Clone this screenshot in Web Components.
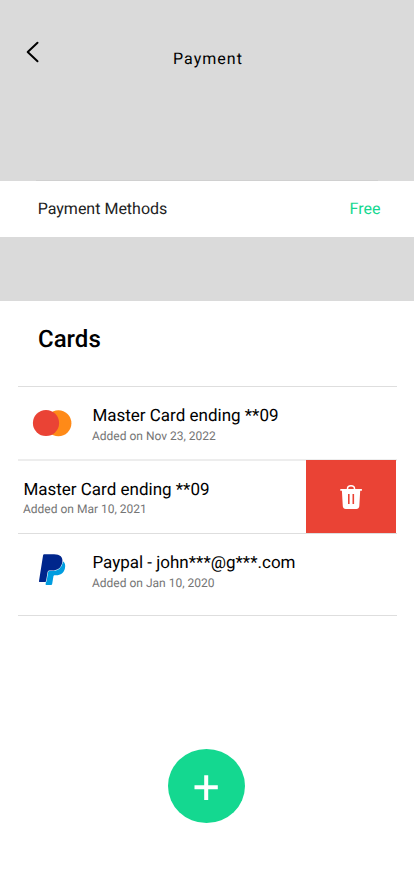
<!DOCTYPE html>
<html lang="en">
<head>
<meta charset="utf-8">
<title>Payment</title>
<style>
html,body{margin:0;background:#fff}
body{font-family:Roboto,"Liberation Sans",sans-serif;color:#000;width:414px;height:896px;overflow:hidden;text-rendering:geometricPrecision}
</style>
</head>
<body>
<payment-screen></payment-screen>
<script>
const define = (name, markup) => customElements.define(name, class extends HTMLElement {
  constructor() {
    super();
    this.attachShadow({ mode: 'open' }).innerHTML = markup;
  }
});

define('page-header', `
<style>
:host{display:flex;flex-direction:column;justify-content:space-between;height:181px;background:#dadada}
.bar{display:grid;grid-template-columns:60px 1fr 60px;padding-top:40px}
svg{display:block;margin-left:25px}
h1{margin:9px 0 0 2px;text-align:center;font-size:16px;line-height:19px;font-weight:400;letter-spacing:1.04px}
hr{width:342px;margin:0 36px;border:0;height:1px;background:#d0d0d0}
</style>
<div class="bar">
<svg width="16" height="24" viewBox="0 0 16 24" fill="none" stroke="#000" stroke-width="2" stroke-linecap="round" stroke-linejoin="round"><path d="M12.5 2.8 2.7 12l9.8 9.2"/></svg>
<h1><slot></slot></h1></div><hr>`);

define('method-bar', `
<style>
:host{display:flex;justify-content:space-between;align-items:center;height:56px;box-sizing:border-box;padding:0 33.5px 2px 37.7px;background:#fff;font-size:16px;line-height:19px;color:#222}
.price{color:#14d890}
</style>
<span><slot></slot></span><span class="price"><slot name="price"></slot></span>`);

define('cards-title', `
<style>
:host{display:block;height:85px;border-top:64px solid #dadada}
h2{margin:0;padding:24px 0 0 38px;font-size:24px;line-height:28px;font-weight:500}
</style><h2><slot></slot></h2>`);

define('card-row', `
<style>
:host{display:flex;box-sizing:border-box;height:73px;margin:0 17.5px 0 18px;border-top:1px solid #dedede}
:host([swiped]){height:74px;border-top:2px solid #ededed}
.icon{width:74.4px;flex:none}
:host([swiped]) .icon{width:5.4px}
.copy{flex:1;padding-top:19px}
.name{font-size:17px;line-height:20px;white-space:nowrap}
.date{font-size:12px;line-height:14px;margin:3px 0 0 -.4px;color:#757575}
:host([swiped]) .date{margin-top:2px}
</style>
<div class="icon"><slot name="icon"></slot></div>
<div class="copy"><div class="name"><slot></slot></div><div class="date"><slot name="date"></slot></div></div>
<slot name="action"></slot>`);

define('mastercard-icon', `
<style>:host{display:block}svg{display:block}</style>
<svg width="74" height="72" viewBox="18 387 74 72"><circle cx="58.4" cy="423.3" r="13" fill="#ff8a17"/><circle cx="46" cy="423" r="13.1" fill="#ea4335"/></svg>`);

define('paypal-icon', `
<style>:host{display:block}svg{display:block}</style>
<svg width="74" height="72" viewBox="18 534 74 72">
<path fill="#009de0" d="M62.9 561.2c2.1 1.4 2.7 3.8 2.1 6.7-1 5-4.2 7.3-9 7.3h-1.1c-.8 0-1.4.5-1.5 1.3l-1.2 7.3c-.1.8-.7 1.3-1.4 1.3h-4.3c-.7 0-1-.5-.9-1.1l2.4-14z"/>
<path fill="#00268c" stroke="#fff" stroke-width="1.1" paint-order="stroke" d="M44.2 554.2h9.9c5.9 0 9.2 2.8 8.2 8.2-1.2 6-5.3 8-10.4 8h-2.4c-1 0-1.7.6-1.9 1.6l-1.5 8.9c-.1.6-.6 1-1.2 1h-5.1c-.6 0-.9-.4-.8-1l4-25.1c.1-1 .5-1.6 1.2-1.6z"/>
</svg>`);

define('delete-action', `
<style>:host{display:flex;width:90px;height:73px;flex:none;background:#ea4335;margin:-1px .5px 0 0}svg{display:block}</style>
<svg width="90" height="73" viewBox="306 460 90 73" fill="none" stroke="#fff">
<path stroke-width="1.5" d="M347.5 489v-.2c0-4 7-4 7 0v.2"/>
<path fill="#fff" stroke="none" d="M340.3 489.1h21.6v1.7h-1.7l-.9 15.5c-.1 1.6-1.3 2.7-2.9 2.7h-10.7c-1.6 0-2.8-1.1-2.9-2.7l-.9-15.5h-1.6z"/>
<path stroke="#ea4335" stroke-width="1.6" d="M348.8 494v10m4.5-10v10"/></svg>`);

define('add-button', `
<style>:host{display:flex;justify-content:center;align-items:center;width:77px;height:74px;margin:133px 0 0 168px;border-radius:50%;background:#14d890}</style>
<svg width="77" height="74" viewBox="168 749 77 74" stroke="#fff" stroke-width="4"><path d="M194.5 787.2h23.3M206.2 775.2v24.8"/></svg>`);

define('payment-screen', `
<style>
:host{display:block;width:414px;height:896px;background:#fff}
.end{height:83px;border-bottom:1px solid #dedede}
</style>
<page-header>Payment</page-header>
<method-bar>Payment Methods<span slot="price">Free</span></method-bar>
<cards-title>Cards</cards-title>
<card-row><mastercard-icon slot="icon"></mastercard-icon>Master Card ending **09<span slot="date">Added on Nov 23, 2022</span></card-row>
<card-row swiped>Master Card ending **09<span slot="date">Added on Mar 10, 2021</span><delete-action slot="action"></delete-action></card-row>
<card-row class="end"><paypal-icon slot="icon"></paypal-icon>Paypal - john***@g***.com<span slot="date">Added on Jan 10, 2020</span></card-row>
<add-button></add-button>`);
</script>
</body>
</html>
